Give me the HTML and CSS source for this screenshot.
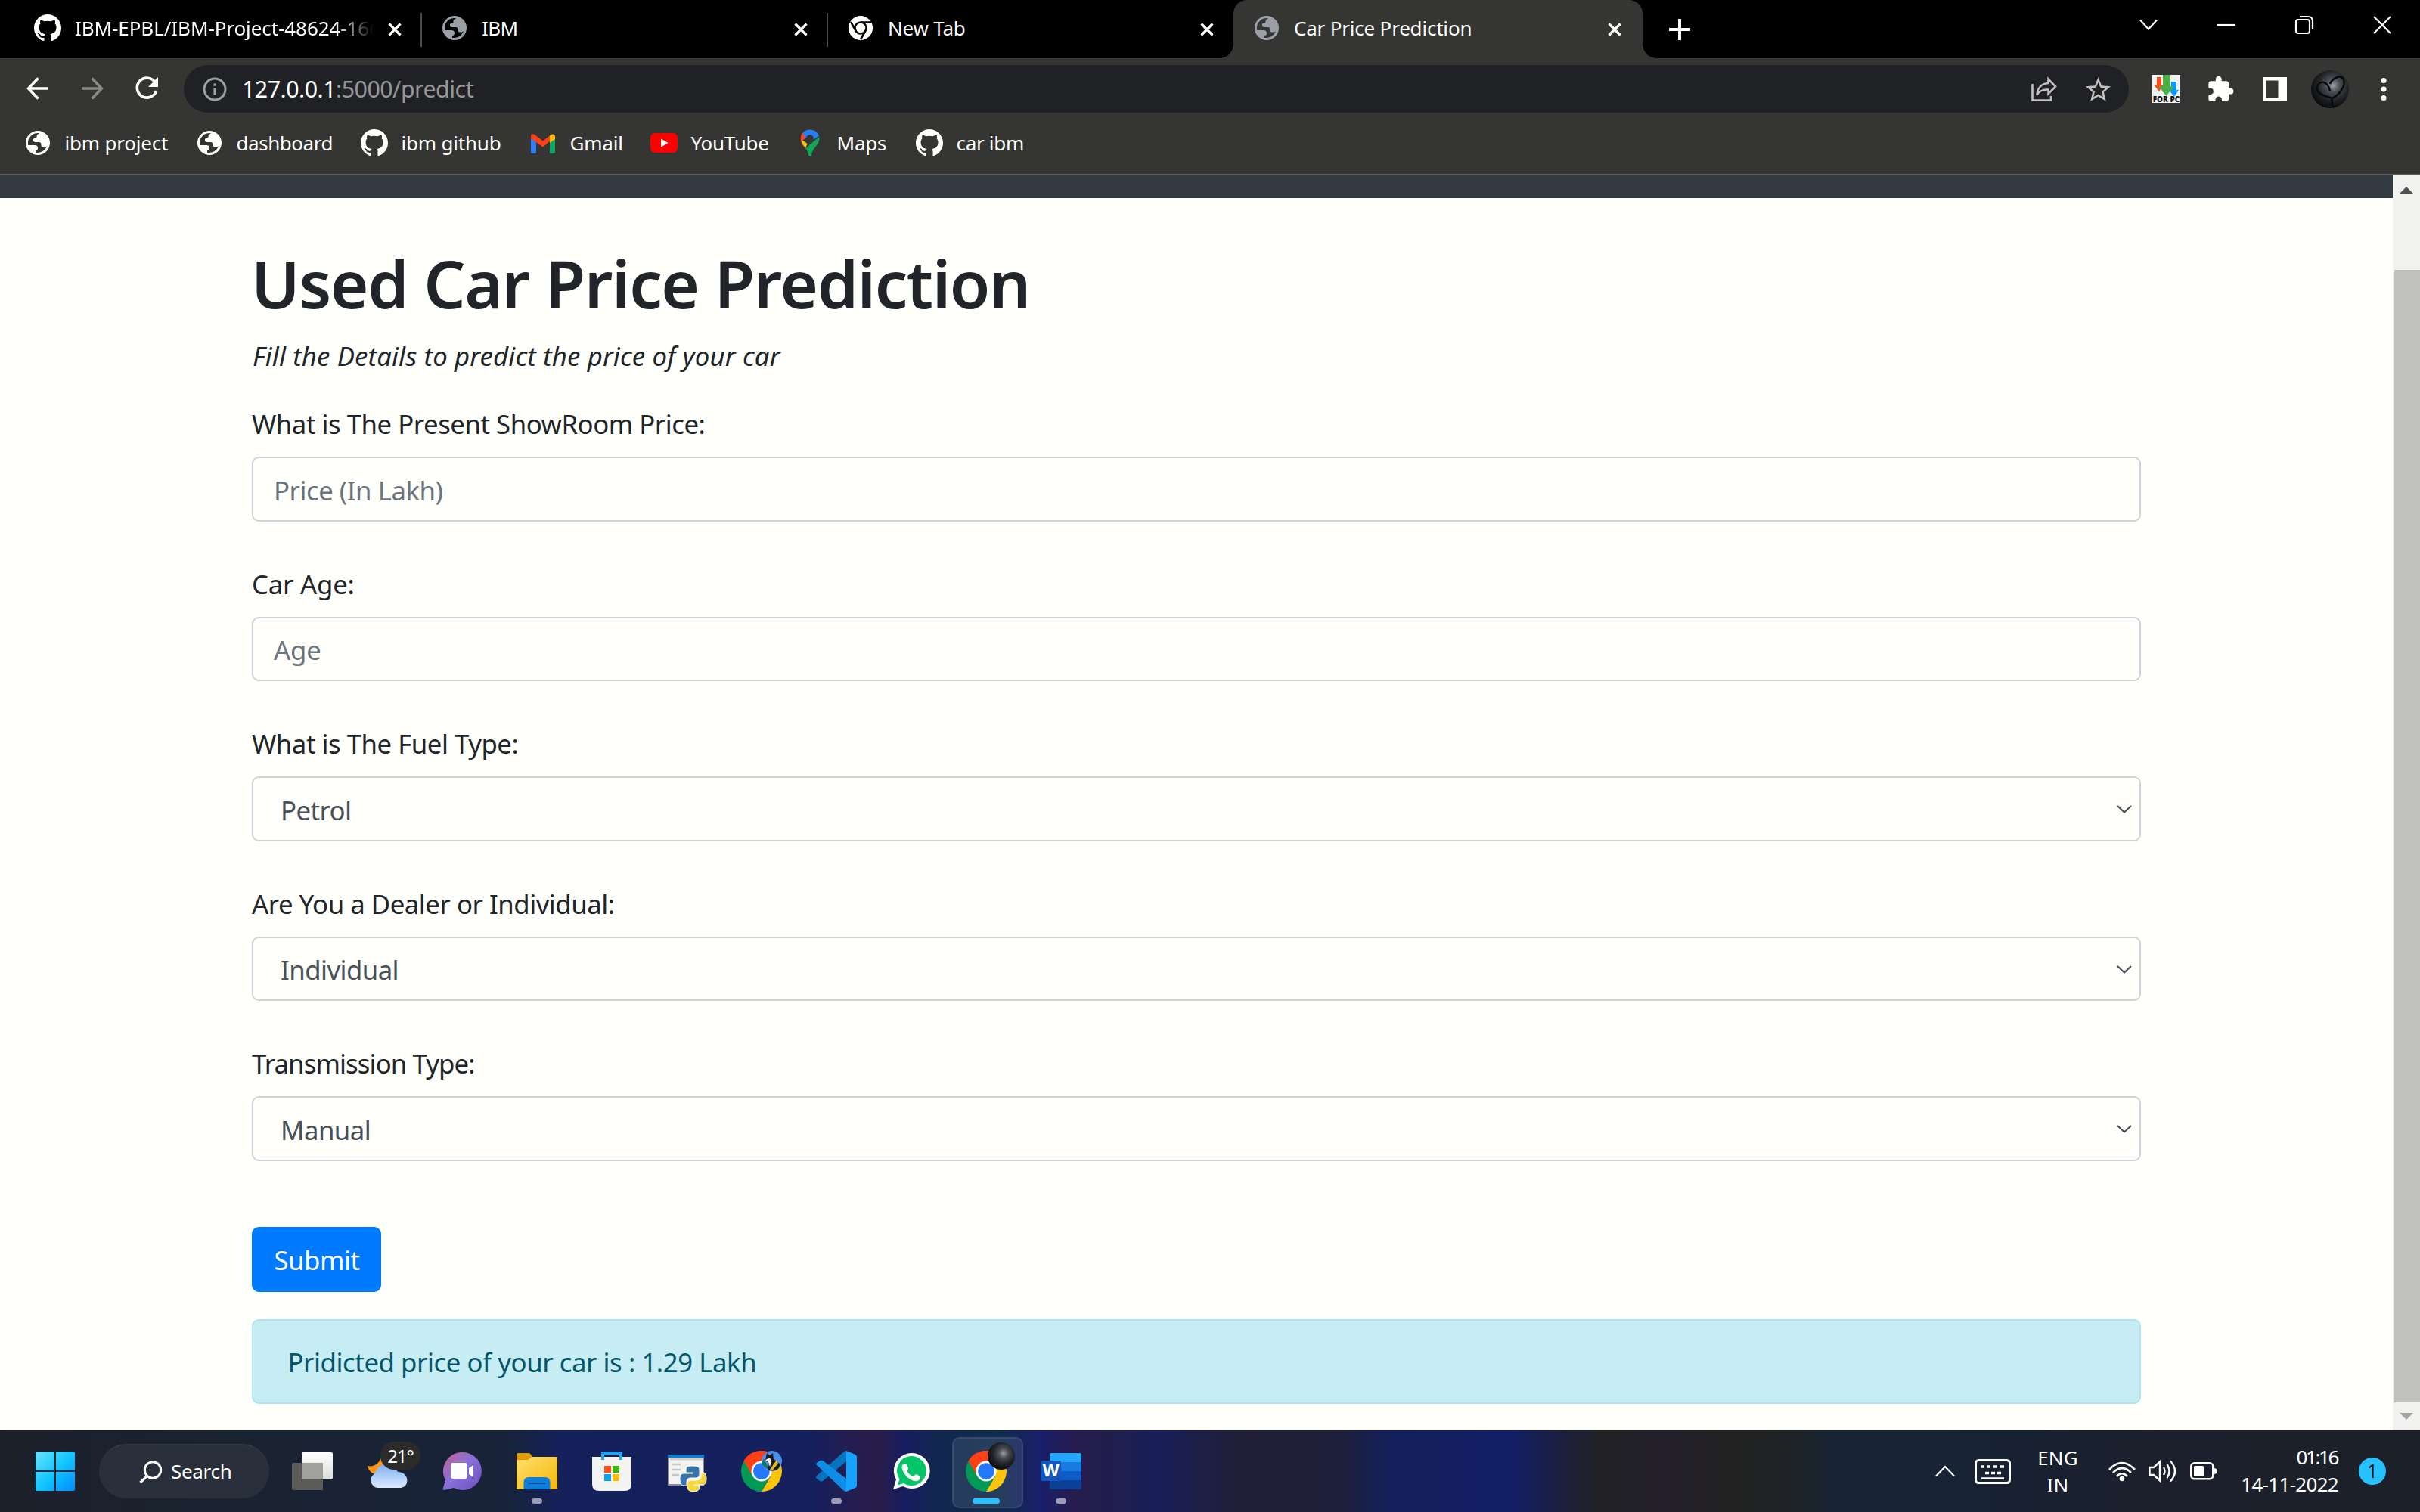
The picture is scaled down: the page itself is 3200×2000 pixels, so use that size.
FILE: index.html
```html
<!DOCTYPE html>
<html lang="en">
<head>
<meta charset="utf-8">
<title>Car Price Prediction</title>
<link rel="stylesheet" href="styles.css">
</head>
<body>
<svg width="0" height="0" class="defs" aria-hidden="true">
  <symbol id="github" viewBox="0 0 16 16"><path fill="#fffffc" d="M8 0C3.58 0 0 3.58 0 8c0 3.54 2.29 6.53 5.47 7.59.4.07.55-.17.55-.38 0-.19-.01-.82-.01-1.49-2.01.37-2.53-.49-2.69-.94-.09-.23-.48-.94-.82-1.13-.28-.15-.68-.52-.01-.53.63-.01 1.08.58 1.23.82.72 1.21 1.87.87 2.33.66.07-.52.28-.87.51-1.07-1.78-.2-3.64-.89-3.64-3.95 0-.87.31-1.59.82-2.15-.08-.2-.36-1.02.08-2.12 0 0 .67-.21 2.2.82.64-.18 1.32-.27 2-.27s1.36.09 2 .27c1.53-1.04 2.2-.82 2.2-.82.44 1.1.16 1.92.08 2.12.51.56.82 1.27.82 2.15 0 3.07-1.87 3.75-3.65 3.95.29.25.54.73.54 1.48 0 1.07-.01 1.93-.01 2.2 0 .21.15.46.55.38A8.01 8.01 0 0 0 16 8c0-4.42-3.58-8-8-8z"/></symbol>
  <symbol id="globe" viewBox="0 0 32 32"><path fill="currentColor" fill-rule="evenodd" d="M16 0a16 16 0 1 0 0 32a16 16 0 0 0 0-32zM18.5 3.2C16 4 14.500 5.500 14.500 7.500c0 2-1 2.500-3 2.500c-1.500 0-1.500 1-1.500 2.500c0 2 1.500 2.500 4 2.500h3c3 0 3.500 1.500 3.500 4c0 2 1 2.500 3.500 2.500c2 0 3-.5 4-1.500A13 13 0 0 1 13 28.700v-2.700c2.500 0 3-1.500 3-3.500c0-2.500-2-3.500-4-3.500H3.300A13 13 0 0 1 18.500 3.200z"/></symbol>
  <symbol id="x" viewBox="0 0 18 18"><path d="M1.500 1.500l15 15m0-15l-15 15" stroke="#fffffc" stroke-width="3.200" fill="none"/></symbol>
  <symbol id="chrome" viewBox="0 0 54 54">
    <path fill="#ff4015" d="M27 27L3.600 13.500A27 27 0 0 1 50.400 13.500z"/>
    <path fill="#009a57" d="M27 27L3.600 13.500A27 27 0 0 0 27 54l11.700-20.200z"/>
    <path fill="#fbc50d" d="M27 13.500h23.400A27 27 0 0 1 27 54l12-20z"/>
    <path fill="#ff4015" d="M3.600 13.500L15.300 33.700 27 13.500h23.400A27 27 0 0 0 3.600 13.500z"/>
    <circle cx="27" cy="27" r="13.500" fill="#fff"/><circle cx="27" cy="27" r="10.800" fill="#2478fb"/>
  </symbol>
  <radialGradient id="orb" cx=".58" cy=".4" r=".6"><stop offset="0" stop-color="#99a2a8"/><stop offset=".3" stop-color="#4a4e53"/><stop offset=".65" stop-color="#222427"/><stop offset="1" stop-color="#0b0c0e"/></radialGradient>
  <symbol id="avatar" viewBox="0 0 50 50"><circle cx="25" cy="25" r="25" fill="url(#orb)"/><path d="M25 27C22 13 10 13 8 22C6 32 20 34 28 37C38 32 46 20 43 12C39 4 27 12 25 18M28 37Q26 43 30 49" fill="none" stroke="#08090b" stroke-width="2.500"/></symbol>
  <symbol id="chev" viewBox="0 0 20 12"><path d="M1 1l9 8.500L19 1" fill="none" stroke="#4a5058" stroke-width="2.200"/></symbol>
</svg>

<header class="tabs">
  <div class="tab"><svg class="fav big"><use href="#github"/></svg><span class="title fade">IBM-EPBL/IBM-Project-48624-166</span><svg class="close"><use href="#x"/></svg></div>
  <div class="tab"><svg class="fav grey"><use href="#globe"/></svg><span class="title tight">IBM</span><svg class="close"><use href="#x"/></svg></div>
  <div class="tab last"><svg class="fav" viewBox="0 0 32 32"><circle cx="16" cy="16" r="16" fill="#fffffc"/><g stroke="#000" stroke-width="2.600" fill="none"><circle cx="16" cy="16" r="7.500"/><path d="M16 8.500h14M9.500 19.700L3 8M22.500 19.700L16 31"/></g></svg><span class="title">New Tab</span><svg class="close"><use href="#x"/></svg></div>
  <div class="tab active"><svg class="fav grey"><use href="#globe"/></svg><span class="title">Car Price Prediction</span><svg class="close"><use href="#x"/></svg></div>
  <svg class="plus" viewBox="0 0 28 28"><path d="M14 0v28M0 14h28" stroke="#fffffc" stroke-width="4"/></svg>
  <div class="winctl">
    <svg viewBox="0 0 24 24"><path d="M1 5.500l11 12 11-12" class="w"/></svg>
    <svg viewBox="0 0 24 24"><path d="M0 12h24" class="w"/></svg>
    <svg viewBox="0 0 24 24"><rect x="1" y="5" width="18" height="18" rx="3" class="w"/><path d="M6 1h11q6 0 6 6v11" class="w"/></svg>
    <svg viewBox="0 0 24 24"><path d="M1 1l22 22m0-22L1 23" class="w"/></svg>
  </div>
</header>

<div class="toolbar">
  <div class="nav-buttons">
    <svg viewBox="0 0 30 30"><path d="M29 15H3M15.500 1.500L2.500 15l13 13.500" stroke="#fffffc" stroke-width="3.400" fill="none"/></svg>
    <svg viewBox="0 0 30 30"><path d="M1 15h26M14.500 1.500l13 13.500-13 13.500" stroke="#8a8a88" stroke-width="3.400" fill="none"/></svg>
    <svg viewBox="0 0 30 30"><path d="M26.500 7.500A13 13 0 1 0 27.700 18" stroke="#fffffc" stroke-width="3.600" fill="none"/><path d="M30 0v13H17z" fill="#fffffc"/></svg>
  </div>
  <div class="omnibox">
    <svg class="info" viewBox="0 0 32 32"><circle cx="16" cy="16" r="14" fill="none" stroke="#9aa0a6" stroke-width="3"/><path d="M16 14.500v9M16 8.500v3.200" stroke="#9aa0a6" stroke-width="3.200"/></svg>
    <span class="url">127.0.0.1<span class="path">:5000/predict</span></span>
    <svg class="share" viewBox="0 0 34 32"><g fill="none" stroke="#c0c0bf" stroke-width="2.600"><path d="M1.500 9v21.500h24.500V25"/><path d="M22.500 2.500L32 12.500l-9.500 9.500v-5.500C15 16 10.500 18 7.500 23.500 8 15 13 8.500 22.500 8z"/></g></svg>
    <svg class="star" viewBox="2 2 20 19"><path fill="#c0c0bf" d="M22 9.240l-7.190-.62L12 2 9.190 8.630 2 9.240l5.460 4.730L5.820 21 12 17.270 18.180 21l-1.630-7.030L22 9.240zM12 15.400l-3.760 2.270 1-4.280-3.320-2.880 4.380-.38L12 6.100l1.710 4.040 4.380.38-3.320 2.880 1 4.280L12 15.400z"/></svg>
  </div>
  <div class="exts">
    <svg viewBox="0 0 37 37" width="37" height="37"><path fill="#f1f2f2" d="M0 0h37v37H0z"/><path fill="#ff4a1c" d="M6 3h6v10h3L9 22 2 13h4z"/><path fill="#0a96ff" d="M25 9h7v11h3l-6 9-7-9h3z"/><path fill="#4db047" d="M14 0h10v15h5L18.500 28 8 15h6z"/><text x="18.500" y="36" class="forpc">FOR PC</text></svg>
    <svg viewBox="2 1 20.500 21" width="33" height="33"><path fill="#fffffc" d="M20.500 11H19V7c0-1.100-.9-2-2-2h-4V3.500a2.500 2.500 0 0 0-5 0V5H4c-1.100 0-1.990.9-1.990 2v3.800H3.500c1.490 0 2.700 1.210 2.700 2.700s-1.210 2.700-2.700 2.700H2V20c0 1.100.9 2 2 2h3.800v-1.500c0-1.490 1.210-2.700 2.700-2.700s2.700 1.210 2.700 2.700V22H17c1.100 0 2-.9 2-2v-4h1.500a2.500 2.500 0 0 0 0-5z"/></svg>
    <svg viewBox="0 0 32 32" width="32" height="32"><path fill="#fffffc" fill-rule="evenodd" d="M0 0h32v32H0zM4.500 4.500v23h16v-23z"/></svg>
    <svg width="50" height="50"><use href="#avatar"/></svg>
    <svg viewBox="0 0 8 32" width="8" height="32" fill="#fffffc"><circle cx="4" cy="4.500" r="3.600"/><circle cx="4" cy="16" r="3.600"/><circle cx="4" cy="27.500" r="3.600"/></svg>
  </div>
</div>

<nav class="bookmarks">
  <span><svg class="g"><use href="#globe"/></svg>ibm project</span>
  <span><svg class="g"><use href="#globe"/></svg><b class="mid">dashboard</b></span>
  <span><svg><use href="#github"/></svg>ibm github</span>
  <span><svg viewBox="0 0 36 36"><path fill="#2e7ff8" d="M2 10l7 5v17H4q-2 0-2-2z"/><path fill="#0aa560" d="M34 10l-7 5v17h5q2 0 2-2z"/><path fill="#ff4015" d="M2 12V9q1-4.500 5.500-1.500L18 15.500l10-8V15L18 23.500z"/><path fill="#fbbc05" d="M27 8.500c4-4 7-1.500 7 1.500v3l-7 5z"/></svg>Gmail</span>
  <span><svg viewBox="0 0 36 36"><rect y="5" width="36" height="26" rx="6" fill="#fe0000"/><path d="M14 12.500l9.500 5.500-9.500 5.500z" fill="#fff"/></svg><b>YouTube</b></span>
  <span><svg viewBox="0 0 36 36"><path fill="#0fa658" d="M30.200 10c1.500 11-8.500 13-10 24q-2 4-4 0c-.8-4-2-6.500-4-9z"/><path fill="#fcc10a" d="M6 13l8.500 6L12.200 25C9 21 6 18 6 13z"/><path fill="#ff4525" d="M8.500 4.500L14 10 6.700 16C5 12 6 7 8.500 4.500z"/><path fill="#2580f8" d="M8.500 4.500C14-2 27-1 30 9L20 15l-8-4z"/><circle cx="18" cy="12" r="4.800" fill="#353533"/></svg>Maps</span>
  <span><svg><use href="#github"/></svg><b>car ibm</b></span>
</nav>

<section class="viewport">
  <main class="page">
    <div class="navbar"></div>
    <div class="container">
      <h1>Used Car Price Prediction</h1>
      <p class="lead">Fill the Details to predict the price of your car</p>
      <div class="group"><label>What is The Present ShowRoom Price:</label><div class="control ph">Price (In Lakh)</div></div>
      <div class="group"><label class="loose">Car Age:</label><div class="control ph loose">Age</div></div>
      <div class="group"><label>What is The Fuel Type:</label><div class="control sel">Petrol<svg><use href="#chev"/></svg></div></div>
      <div class="group"><label>Are You a Dealer or Individual:</label><div class="control sel">Individual<svg><use href="#chev"/></svg></div></div>
      <div class="group"><label class="trans">Transmission Type:</label><div class="control sel">Manual<svg><use href="#chev"/></svg></div></div>
      <button class="submit">Submit</button>
      <div class="alert">Pridicted price of your car is : 1.29 Lakh</div>
    </div>
  </main>
  <div class="scrollbar">
    <svg viewBox="0 0 18 9"><path d="M9 0l9 9H0z" fill="#505050"/></svg>
    <div class="thumb"></div>
    <svg viewBox="0 0 18 9"><path d="M0 0h18L9 9z" fill="#a3a3a3"/></svg>
  </div>
</section>

<footer class="taskbar">
  <svg class="start" viewBox="0 0 52 52"><defs><linearGradient id="wg" x1="0" y1="0" x2="52" y2="52" gradientUnits="userSpaceOnUse"><stop offset="0" stop-color="#6be2ff"/><stop offset=".5" stop-color="#12c6ff"/><stop offset="1" stop-color="#008cff"/></linearGradient></defs><path fill="url(#wg)" d="M2 0h23v25H0V2q0-2 2-2zM27 0h23q2 0 2 2v23H27zM0 27h25v25H2q-2 0-2-2zM27 27h25v23q0 2-2 2H27z"/></svg>
  <div class="search"><svg viewBox="0 0 30 30"><circle cx="18" cy="12.500" r="10.700" fill="none" stroke="#fff" stroke-width="3"/><path d="M10.500 20.500L1.500 29" stroke="#fff" stroke-width="3.200"/></svg>Search</div>
  <div class="apps">
    <div class="app"><svg viewBox="0 0 54 54"><defs><linearGradient id="tv" x1="0" y1="0" x2="0" y2="1"><stop offset="0" stop-color="#fff"/><stop offset="1" stop-color="#dcdcda"/></linearGradient></defs><rect x="13" y="2" width="41" height="36" rx="2" fill="url(#tv)"/><path fill="#5a5a59" d="M2 16h11v22h28v14H2q-2 0-2-2V18q0-2 2-2z"/><path fill="#a0a09e" d="M13 16h28v22H13z"/></svg></div>
    <div class="app"><svg viewBox="0 0 54 54"><defs><linearGradient id="cl" x1="0" y1="0" x2="0" y2="1"><stop offset="0" stop-color="#7fb0f5"/><stop offset="1" stop-color="#dcebff"/></linearGradient></defs><path fill="#ff9414" d="M1 20C10 22 17 16 18 10l10 10-10 11C9 33 2 27 1 20z"/><path fill="url(#cl)" d="M15 49A10 10 0 0 1 11 30C14 15 34 14 41 28C57 28 57 49 44 49z"/></svg><span class="temp">21°</span></div>
    <div class="app"><svg viewBox="0 0 54 54"><defs><linearGradient id="ch" x1="0" y1="0" x2="1" y2="1"><stop offset="0" stop-color="#c4628f"/><stop offset=".45" stop-color="#8a70d8"/><stop offset="1" stop-color="#6a50c0"/></linearGradient></defs><path fill="url(#ch)" d="M27 2a25 25 0 1 1-11 47L3 52q-2 0-1-3l3-10A25 25 0 0 1 27 2z"/><rect x="12" y="16" width="22" height="21" rx="3" fill="#fff"/><path d="M36 23l6-4v16l-6-4z" fill="#fff"/></svg></div>
    <div class="app run"><svg viewBox="0 0 54 54"><defs><linearGradient id="fo" x1="0" y1="0" x2="1" y2="1"><stop offset="0" stop-color="#ffe06b"/><stop offset="1" stop-color="#f5b60c"/></linearGradient></defs><path fill="#dd9c06" d="M0 5q0-2 2-2h14q2 0 3 2l4 5v4H0z"/><path fill="url(#fo)" d="M0 13q0-1 2-1h13l5-4h32q2 0 2 2v39q0 2-2 2H2q-2 0-2-2z"/><path fill="#0d7edc" d="M9.500 51V42q0-7 7-7h21q7 0 7 7v9z"/><path d="M16 43h22" stroke="#05509a" stroke-width="2"/></svg></div>
    <div class="app"><svg viewBox="0 0 54 54"><path d="M15 13V3h24v10" fill="none" stroke="#1aa7f5" stroke-width="4"/><path fill="#f3f3f2" d="M1 8h52v36q0 9-9 9H10q-9 0-9-9z"/><path d="M15 8v4M39 8v4" stroke="#1aa7f5" stroke-width="4"/><path fill="#ff5016" d="M17 20h9v9h-9z"/><path fill="#3bb40a" d="M28 20h9v9h-9z"/><path fill="#0aa0f5" d="M17 31h9v9h-9z"/><path fill="#ffb900" d="M28 31h9v9h-9z"/></svg></div>
    <div class="app"><svg viewBox="0 0 54 54"><path fill="#8b8b88" d="M2 5h48v41H2z"/><path fill="#f3f3f1" d="M4 9h44v35H4z"/><path fill="#0f7cd8" d="M2 5h48v4H2z"/><path d="M7 18h12M7 25h12M7 32h10" stroke="#c4c4c2" stroke-width="2.500"/><path d="M5 11h43" stroke="#d0d0ce" stroke-width="3"/><path stroke="#fff" stroke-width="1" fill="#3674aa" d="M34 20c-7 0-8 2-8 5v4h9v1H24c-5 0-6 3-6 8s2 8 5 8h4v-5c0-3 2-5 5-5h7c3 0 5-2 5-5v-6c0-4-4-5-10-5z"/><path stroke="#fff" stroke-width="1" fill="#f5d83c" d="M46 29v5c0 3-3 5-5 5h-8c-3 0-5 2-5 4v6c0 3 4 5 8 5s8-2 8-5v-3h-7v-1h11c4 0 5-4 5-8s-1-8-4-8z"/></svg></div>
    <div class="app"><svg><use href="#chrome"/></svg><svg class="badge" viewBox="0 0 27 27"><circle cx="13.500" cy="13.500" r="13.500" fill="#4e8fec"/><path d="M0 16l3-5 5 9v4q-6-2-8-8z" fill="#0a7a60"/><path d="M5 12l2-9 4 3 4-3 1 8 9 7-3 6q-8 5-14 0l2-6z" fill="#191b22"/><path d="M5 12l6-3 2 6-2 6-2-6z" fill="#f4f4f2"/><path d="M20 12l-9 13h4l7-8z" fill="#f0b414"/></svg></div>
    <div class="app run"><svg viewBox="0 0 54 54"><path fill="#0673bf" d="M0 36l5 4q2 1 4 0L40 14V0q-2 0-3 1L1 33q-1 1.500-1 3z"/><path fill="#0d8ce8" d="M0 18q0-1.500 1-2l4-3q2-1 4 0l31 24v17q-2 0-3-1z"/><path fill="#14a4ff" d="M40 0l12 5q2 1 2 3v38q0 2-2 3l-12 5z"/></svg></div>
    <div class="app"><svg viewBox="0 0 54 54"><path fill="#fffffc" d="M27 3a24 23.500 0 1 1-11 44L3 51l4-13A24 23.500 0 0 1 27 3z"/><path fill="#04c468" d="M27 7a19.500 19.500 0 1 1-10 36l-8 2.500 2.500-8A19.500 19.500 0 0 1 27 7z"/><path fill="#fffffc" d="M16 18c2-2 5-1 5.500 1l1.500 4c.5 1-1.500 3-1.500 4 2 3.500 5 6 8 7 1.500 0 2.500-3 4-3l4.500 2.500c2 1 1 4-1 5.500-4 3-11 0-15.500-4.500S12 22 16 18z"/></svg></div>
    <div class="app current"><svg><use href="#chrome"/></svg><svg class="badge orb" viewBox="0 0 36 36"><circle cx="18" cy="18" r="18" fill="url(#orb)"/></svg></div>
    <div class="app run"><svg viewBox="0 0 54 54"><path fill="#24a6ff" d="M12 5q0-2 2-2h38q2 0 2 2v10H12z"/><path fill="#187ce0" d="M12 15h42v12H12z"/><path fill="#0f5cc8" d="M12 27h42v12H12z"/><path fill="#0c3f96" d="M12 39h42v10q0 2-2 2H14q-2 0-2-2z"/><rect y="13" width="27" height="27" rx="2.500" fill="#1257c0"/><text x="13.500" y="33.500" class="word">W</text></svg></div>
  </div>
  <div class="tray">
    <svg class="up" viewBox="0 0 26 14"><path d="M1 13.500L13 1l12 12.500" class="w"/></svg>
    <svg class="kbd" viewBox="0 0 48 33"><rect x="1.500" y="1.500" width="45" height="30" rx="4" fill="none" stroke="#fff" stroke-width="3"/><path d="M8 10h5M16 10h5M25 10h5M34 10h5M14 18.500h5M22 18.500h5M30 18.500h5" stroke="#fff" stroke-width="3.600"/><path d="M9 25.500h30" stroke="#fff" stroke-width="2.600"/></svg>
    <div class="lang">ENG<br>IN</div>
    <svg class="wifi" viewBox="0 0 36 27"><g fill="none" stroke="#fff" stroke-width="2.600"><path d="M1 11Q18-7 35 11"/><path d="M6 15Q18 3 30 15"/><path d="M11 20Q18 12.500 25 20"/></g><circle cx="18" cy="23" r="3.300" fill="#fff"/></svg>
    <svg class="vol" viewBox="0 0 37 30"><g fill="none" stroke="#fff" stroke-width="2.400"><path d="M1.500 10h5.500l8-7.500v25L7 20H1.500z"/><path d="M20 10q3 5 0 10M24.500 6q6 9 0 18M29 1.500q12 13.500 0 27"/></g></svg>
    <svg class="bat" viewBox="0 0 36 24"><rect x="1.300" y="1.300" width="29" height="21" rx="4.500" fill="none" stroke="#fff" stroke-width="2.600"/><rect x="5" y="5" width="13" height="14" rx="1.500" fill="#fff"/><path d="M31 8q5 0 5 4t-5 4z" fill="#fff"/></svg>
    <div class="clock"><span class="time">01:16</span><span>14-11-2022</span></div>
    <div class="count">1</div>
  </div>
</footer>
</body>
</html>
```
FILE: styles.css
```css
* { box-sizing: border-box; }
html, body { margin: 0; }
body {
  width: 3200px; height: 2000px; overflow: hidden;
  display: grid; grid-template-rows: 77px 78px 77px 1660px 108px;
  background: #fffffc; color: #fffffc;
  font: 26px "Noto Sans", "Open Sans", sans-serif;
}
.defs { position: absolute; }
svg { display: block; flex: none; overflow: visible; }
.w { fill: none; stroke: #fff; stroke-width: 2.200; }

/* tab strip */
.tabs { display: flex; align-items: center; background: #000; padding-left: 20px; }
.tab { width: 537px; height: 77px; display: flex; align-items: center; padding: 0 26px 3px 28px; position: relative; letter-spacing: -.2px; }
.tab:not(.last):not(.active)::after { content: ""; position: absolute; right: -1px; top: 17px; width: 2px; height: 45px; background: #4c4c4b; }
.fav { width: 32px; height: 32px; margin-right: 20px; }
.fav.big { width: 36px; height: 36px; margin: 0 18px 0 -3px; }
.grey { color: #9aa0a6; }
.title { white-space: nowrap; }
.title.tight { letter-spacing: -.6px; }
.title.fade { letter-spacing: -.08px; -webkit-mask-image: linear-gradient(90deg, #000 345px, transparent 395px); mask-image: linear-gradient(90deg, #000 345px, transparent 395px); }
.close { width: 18px; height: 18px; margin-left: auto; margin-top: 3px; }
.tab.active { width: 541px; padding-right: 28px; background: #353533; border-radius: 18px 18px 0 0; }
.tab.active::before, .tab.active::after { content: ""; position: absolute; bottom: 0; width: 18px; height: 18px; }
.tab.active::before { left: -18px; background: radial-gradient(circle at 0 0, transparent 17.500px, #353533 18px); }
.tab.active::after { right: -18px; background: radial-gradient(circle at 100% 0, transparent 17.500px, #353533 18px); }
.plus { width: 28px; height: 28px; margin-left: 35px; }
.winctl { margin-left: auto; padding: 0 38px 12px 0; display: flex; gap: 79px; }
.winctl svg { width: 24px; height: 24px; }

/* toolbar */
.toolbar { background: #353533; display: flex; align-items: flex-start; padding-top: 9px; }
.nav-buttons { display: flex; gap: 42px; width: 243px; padding: 16px 0 0 35px; }
.nav-buttons svg { width: 30px; height: 30px; }
.omnibox { width: 2572px; height: 63px; border-radius: 32px; background: #202124; display: flex; align-items: center; padding: 0 24px 0 25px; }
.info { width: 32px; height: 32px; }
.url { margin: 0 auto 0 20px; font-size: 30.350px; letter-spacing: -.5px; }
.path { color: #969798; }
.share { width: 34px; height: 32px; margin-right: 38px; }
.star { width: 33px; height: 32px; }
.exts { height: 63px; display: flex; align-items: center; padding-left: 31px; }
.exts svg:nth-child(2) { margin-left: 37px; }
.exts svg:nth-child(3) { margin-left: 39px; }
.exts svg:nth-child(4) { margin-left: 32px; }
.exts svg:nth-child(5) { margin-left: 42px; }
.forpc { font: 800 10px "Open Sans", sans-serif; text-anchor: middle; fill: #111; }

/* bookmarks */
.bookmarks { background: #353533; border-bottom: 2px solid #5f5f5f; display: grid; grid-template-columns: 227px 218px 223px 160px 193px 158px 200px; padding: 13px 0 0 32px; align-items: start; }
.bookmarks span { display: flex; align-items: center; height: 42px; white-space: nowrap; letter-spacing: -.2px; }
.bookmarks b { font-weight: 400; letter-spacing: -.3px; }
.bookmarks b.mid { letter-spacing: -.45px; }
.bookmarks svg { width: 36px; height: 36px; margin-right: 17.500px; }
.bookmarks svg.g { width: 32px; height: 32px; margin: 0 19.500px 0 2px; }

/* page */
.viewport { display: grid; grid-template-columns: 3164px 36px; }
.page { color: #212529; font-size: 34.750px; letter-spacing: -.47px; }
.navbar { height: 30px; background: #333a41; }
.container { width: 2498px; margin-left: 333px; }
h1 { margin: 58px 0 16px; font-size: 86.850px; line-height: 108px; font-weight: 600; letter-spacing: -1.450px; margin-left: -1px; }
.lead { margin: 0 0 36px 1px; line-height: 54px; font-style: italic; letter-spacing: .13px; }
.group { display: flex; flex-direction: column; gap: 16px; margin-bottom: 56px; }
label { line-height: 54px; }
.control { height: 85.500px; border: 2px solid #ced4da; border-radius: 9px; padding: 3px 26px 0 27px; display: flex; align-items: center; }
.ph { color: #6c757d; }
.sel { color: #495057; padding: 3px 10px 0 36px; justify-content: space-between; letter-spacing: -.55px; }
.sel svg { width: 20px; height: 12px; }
.loose { letter-spacing: -.2px; }
.trans { letter-spacing: -.89px; }
.submit { display: block; width: 171px; height: 86px; margin: 87px 0 36px; padding: 2px 0 0 1px; border: 0; border-radius: 9px; background: #007bff; color: #fff; font: inherit; letter-spacing: -.5px; }
.alert { height: 112px; border: 2px solid #b0e4ef; border-radius: 9px; background: #c6ecf4; color: #06566a; padding: 2px 0 0 45.500px; display: flex; align-items: center; letter-spacing: -.43px; }
.scrollbar { background: #f1f1f0; display: flex; flex-direction: column; align-items: center; padding: 15px 0 14px; }
.scrollbar svg { width: 18px; height: 9px; }
.thumb { width: 34px; height: 1498px; margin: 101px 0 14px 2px; background: #c1c1c0; }

/* taskbar */
.taskbar {
  display: flex; align-items: center; padding-left: 47px;
  background: linear-gradient(90deg, #1c202b 0, #1a2330 300px, #18233a 670px, #15215a 740px, #14205f 1070px, #241d50 1125px, #291c4a 1160px, #191d60 1195px, #11274f 1240px, #102b4c 1320px, #191f6b 1375px, #281c50 1420px, #211e4c 1460px, #191f5a 1530px, #201f36 1640px, #1e1f3a 1770px, #14205c 1840px, #131f66 2000px, #1c1f3a 2070px, #222224 2120px, #231f2b 2200px, #222221 2290px, #1f2326 2370px, #182433 2420px, #172233 2620px, #1c202c 2860px, #1c202a 100%);
}
.start { width: 52px; height: 52px; margin-right: 32px; }
.search { width: 225px; height: 72px; border-radius: 36px; background: #2a303b; border-top: 2px solid #343a45; display: flex; align-items: center; padding: 0 0 2px 53px; margin-right: 7px; letter-spacing: -.3px; }
.search svg { width: 30px; height: 30px; margin: 2px 12px 0 0; }
.apps { display: flex; }
.app { width: 99px; height: 108px; display: grid; place-items: center; position: relative; }
.app > svg { width: 54px; height: 54px; grid-area: 1 / 1; z-index: 1; }
.run::after { content: ""; position: absolute; left: 43px; bottom: 11px; width: 14px; height: 7px; border-radius: 4px; background: #9a9cb8; }
.current::before { content: ""; position: absolute; left: 5px; top: 9px; width: 90px; height: 90px; border: 2px solid rgba(255,255,255,.08); border-radius: 10px; background: rgba(255,255,255,.09); }
.current::after { content: ""; position: absolute; left: 32px; bottom: 11px; width: 36px; height: 7px; border-radius: 4px; background: #27c1ff; }
.app > .badge { position: absolute; left: 49.500px; top: 27px; width: 27px; height: 27px; }
.app > .badge.orb { left: 52px; top: 16px; width: 36px; height: 36px; }
.temp { position: absolute; left: 41px; top: 15px; width: 53px; height: 37px; border-radius: 18px; background: #2b2b2a; z-index: 2; text-align: center; font-size: 24px; line-height: 37px; letter-spacing: -1px; }
.word { font: 700 23px "Open Sans", sans-serif; text-anchor: middle; fill: #fff; }
.tray { display: flex; align-items: center; margin-left: auto; padding-right: 45px; }
.up { width: 26px; height: 14px; margin-right: 26px; }
.kbd { width: 48px; height: 33px; margin-right: 34px; }
.lang { width: 56px; text-align: center; line-height: 36px; letter-spacing: .2px; margin: 0 39px 0 0; }
.wifi { width: 36px; height: 27px; margin-right: 17px; }
.vol { width: 37px; height: 30px; margin-right: 18px; }
.bat { width: 36px; height: 24px; }
.clock { width: 160px; margin: -3px 27px 0 0; line-height: 36px; display: flex; flex-direction: column; align-items: flex-end; letter-spacing: -.7px; }
.clock .time { letter-spacing: -2.400px; margin-right: 1px; }
.count { width: 36px; height: 36px; border-radius: 50%; background: #27c1ff; color: #111; text-align: center; line-height: 35px; font-size: 25px; }
```
